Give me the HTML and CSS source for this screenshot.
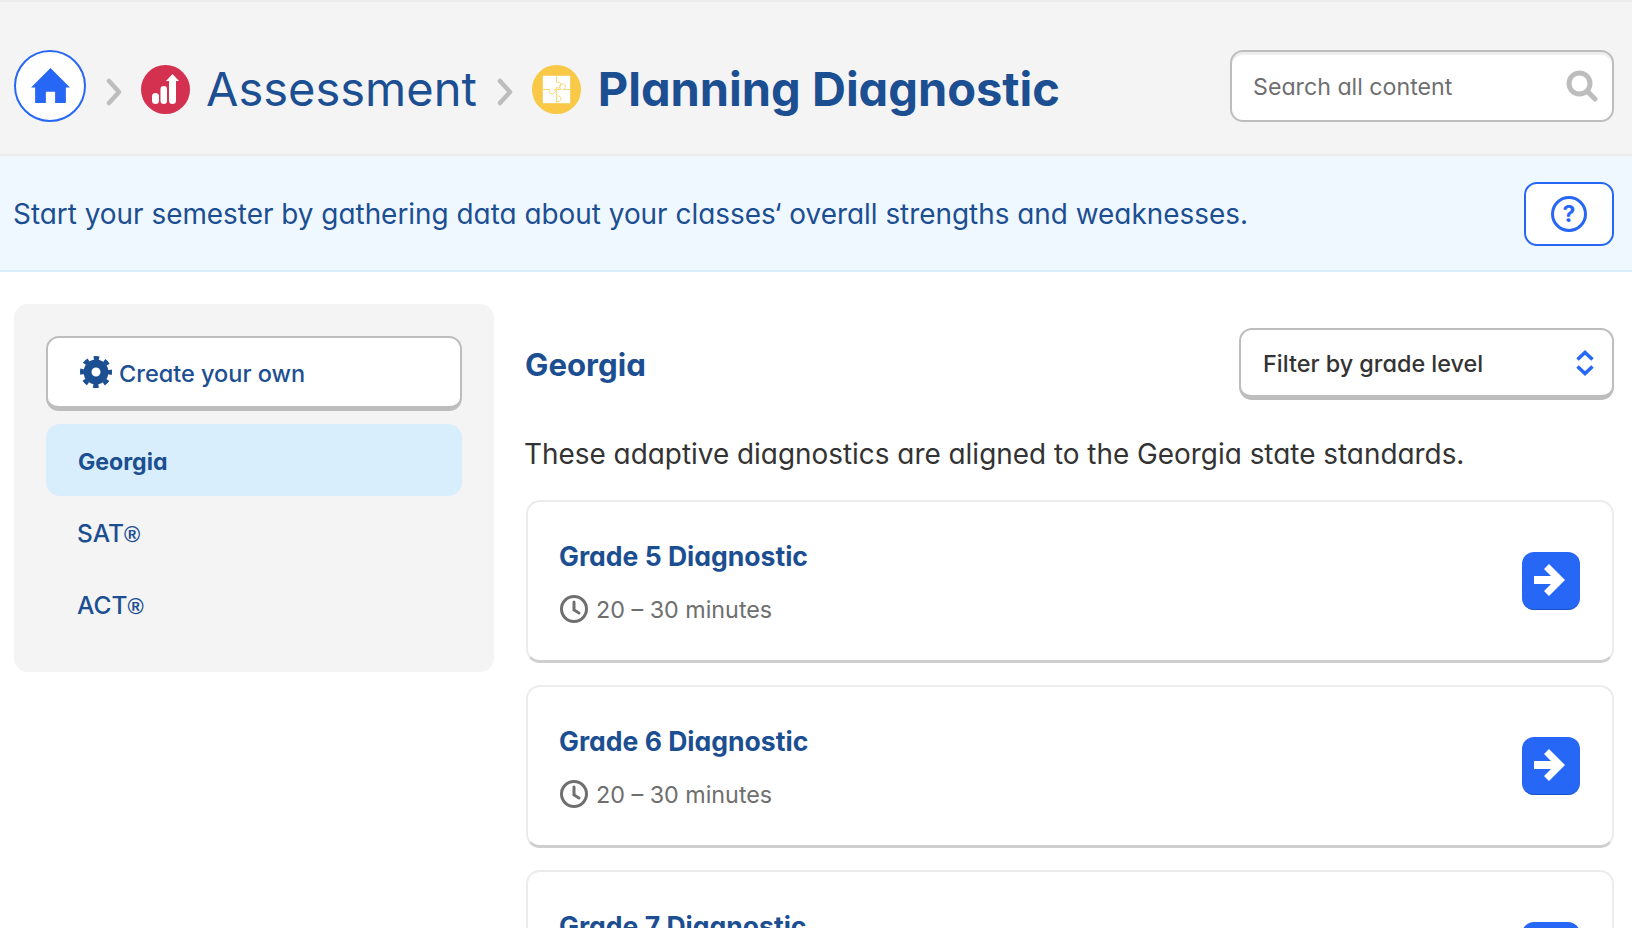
FILE: index.html
```html
<!DOCTYPE html>
<html lang="en">
<head>
<meta charset="utf-8">
<title>Planning Diagnostic</title>
<link rel="stylesheet" href="styles.css">
</head>
<body>
<header class="topbar">
  <nav class="crumbs">
    <a class="home" href="#"><svg viewBox="0 0 40 36" class="home-icon"><path d="M20 1 39 20H35V35H24.500V24H15.500V35H5V20H1Z"/></svg></a>
    <svg class="sep sep-first" viewBox="0 0 16 28"><path d="M3 3 13 14 3 25"/></svg>
    <span class="badge badge-red"><svg viewBox="0 0 49 49" class="badge-svg"><rect x="11" y="28" width="7" height="11" rx="3.500"/><rect x="19.500" y="21" width="6.500" height="18" rx="3.250"/><path d="M28 39V16H25L31.500 9 38 16H35V35.500A3.500 3.500 0 0 1 28 35.500Z"/></svg></span>
    <span class="crumb">Assessment</span>
    <svg class="sep sep-second" viewBox="0 0 16 28"><path d="M3 3 13 14 3 25"/></svg>
    <span class="badge badge-yellow"><svg viewBox="0 0 50 50" class="badge-svg"><rect x="11" y="11" width="28" height="28"/><g class="puzzle"><path d="M25 11V18M25 32V39M11 25H18M32 25H39"/><path d="M25 18A3 3 0 1 1 25 23V25H30A3 3 0 1 1 32 25"/><path d="M18 25A3 3 0 1 0 23 25H25V32A3 3 0 1 1 25 37"/></g></svg></span>
    <h1 class="page-title">Planning Diagnostic</h1>
  </nav>
  <label class="search">
    <span class="search-text">Search all content</span>
    <svg class="search-icon" viewBox="0 0 32 32"><circle cx="13.500" cy="13.500" r="10.500"/><path d="M21.500 21.500 29 29"/></svg>
  </label>
</header>

<section class="intro">
  <p class="intro-text">Start your semester by gathering data about your classes‘ overall strengths and weaknesses.</p>
  <button class="help" type="button"><span class="help-ring">?</span></button>
</section>

<div class="layout">
  <aside class="side">
    <a class="create" href="#"><svg class="gear" viewBox="0 0 32 32"><circle class="gear-hub" cx="16" cy="16" r="8.500"/><circle class="gear-teeth" cx="16" cy="16" r="14"/></svg><span>Create your own</span></a>
    <a class="side-item side-item-active" href="#"><span>Georgia</span></a>
    <a class="side-item" href="#"><span>SAT<span class="reg">®</span></span></a>
    <a class="side-item" href="#"><span>ACT<span class="reg">®</span></span></a>
  </aside>

  <main class="content">
    <div class="content-head">
      <h2 class="content-title">Georgia</h2>
      <div class="filter">
        <span>Filter by grade level</span>
        <svg class="updown" viewBox="0 0 20 26"><path d="M2.500 9.500 10 2.500 17.500 9.500M2.500 16.500 10 23.500 17.500 16.500"/></svg>
      </div>
    </div>
    <p class="lead">These adaptive diagnostics are aligned to the Georgia state standards.</p>

    <article class="card">
      <div class="card-body">
        <h3 class="card-title">Grade 5 Diagnostic</h3>
        <div class="card-time"><svg class="clock" viewBox="0 0 28 28"><circle cx="14" cy="14" r="12.500"/><path d="M14 7V15L19 18"/></svg>20 – 30 minutes</div>
      </div>
      <a class="go" href="#"><svg viewBox="0 0 34 32" class="go-arrow"><path d="M0 12H17L10 5 15 0 31 16 15 32 10 27 17 20H0Z"/></svg></a>
    </article>

    <article class="card">
      <div class="card-body">
        <h3 class="card-title">Grade 6 Diagnostic</h3>
        <div class="card-time"><svg class="clock" viewBox="0 0 28 28"><circle cx="14" cy="14" r="12.500"/><path d="M14 7V15L19 18"/></svg>20 – 30 minutes</div>
      </div>
      <a class="go" href="#"><svg viewBox="0 0 34 32" class="go-arrow"><path d="M0 12H17L10 5 15 0 31 16 15 32 10 27 17 20H0Z"/></svg></a>
    </article>

    <article class="card">
      <div class="card-body">
        <h3 class="card-title">Grade 7 Diagnostic</h3>
        <div class="card-time"><svg class="clock" viewBox="0 0 28 28"><circle cx="14" cy="14" r="12.500"/><path d="M14 7V15L19 18"/></svg>20 – 30 minutes</div>
      </div>
      <a class="go" href="#"><svg viewBox="0 0 34 32" class="go-arrow"><path d="M0 12H17L10 5 15 0 31 16 15 32 10 27 17 20H0Z"/></svg></a>
    </article>
  </main>
</div>
</body>
</html>
```

FILE: styles.css
```css
* { box-sizing: border-box; }
html, body { height: 928px; overflow: hidden; }
body {
  margin: 0;
  background: #fff;
  color: #333;
  font-family: Inter, "Open Sans", sans-serif;
  font-feature-settings: "cv11" 1;
}
a { color: inherit; text-decoration: none; }
h1, h2, h3, p { margin: 0; }

.topbar {
  height: 156px;
  padding: 15px 18px 0 14px;
  display: flex;
  align-items: center;
  justify-content: space-between;
  background: #f4f4f4;
  border-top: 2px solid #ececec;
  border-bottom: 2px solid #ececec;
}
.crumbs { display: flex; align-items: center; color: #1c4f92; }
.home {
  width: 72px;
  height: 72px;
  border-radius: 50%;
  background: #fff;
  border: 2px solid #2767f5;
  display: flex;
  align-items: center;
  justify-content: center;
}
.home-icon { width: 41px; height: 37px; fill: #2767f5; }
.sep { width: 16px; height: 28px; fill: none; stroke: #bdbdbd; stroke-width: 4.500; stroke-linecap: round; stroke-linejoin: round; margin-top: 12px; }
.sep-first { margin-left: 20px; margin-right: 19px; }
.sep-second { margin-left: 20px; margin-right: 19px; }
.badge { width: 49px; height: 49px; border-radius: 50%; display: block; flex: none; margin-top: 8px; }
.badge-red { background: #d43150; }
.badge-yellow { background: #f8c846; }
.badge-svg { display: block; width: 49px; height: 49px; fill: #fff; }
.puzzle { fill: none; stroke: #f8d777; stroke-width: 1; }
.crumb { margin-left: 16px; margin-top: 6px; font-size: 47px; font-weight: 400; line-height: 56px; }
.page-title { margin-left: 17px; margin-top: 6px; font-size: 47px; font-weight: 700; line-height: 56px; }

.search {
  width: 384px;
  height: 72px;
  padding: 0 14px 0 21px;
  display: flex;
  align-items: center;
  justify-content: space-between;
  background: #fff;
  border: 2px solid #bdbdbd;
  border-radius: 13px;
  box-shadow: inset 0 3px 0 #eee;
}
.search-text { font-size: 23.200px; color: #6f6f6f; margin-top: 2px; }
.search-icon { width: 32px; height: 32px; fill: none; stroke: #bdbdbd; stroke-width: 5; stroke-linecap: round; }

.intro {
  height: 116px;
  padding: 2px 18px 0 13px;
  display: flex;
  align-items: center;
  justify-content: space-between;
  background: #f0f8ff;
  border-bottom: 2px solid #d8eefc;
}
.intro-text { font-size: 27.900px; color: #1c4f92; }
.help {
  width: 90px;
  height: 64px;
  padding: 0;
  display: flex;
  align-items: center;
  justify-content: center;
  background: #fff;
  border: 2px solid #2767f5;
  border-radius: 13px;
}
.help-ring {
  width: 36px;
  height: 36px;
  border: 3px solid #2767f5;
  border-radius: 50%;
  color: #2767f5;
  font: 700 23px/30px Inter, sans-serif;
  text-align: center;
}

.layout { padding: 32px 18px 0 14px; display: flex; gap: 31px; align-items: flex-start; }
.side {
  width: 480px;
  flex: none;
  padding: 32px;
  background: #f4f4f4;
  border-radius: 14px;
  color: #1c4f92;
}
.create {
  height: 75px;
  margin-bottom: 13px;
  padding: 2px 0 0 32px;
  display: flex;
  align-items: center;
  gap: 7px;
  font-size: 23.500px;
  font-weight: 500;
  background: #fff;
  border: 2px solid #bdbdbd;
  border-bottom-width: 5px;
  border-radius: 13px;
}
.gear { width: 32px; height: 32px; margin-top: -2px; fill: none; stroke: #1c4f92; }
.gear-hub { stroke-width: 8; }
.gear-teeth { stroke-width: 4; stroke-dasharray: 5.500 5.496; stroke-dashoffset: 2.750; }
.side-item {
  height: 72px;
  padding: 2px 0 0 31px;
  display: flex;
  align-items: center;
  font-size: 24.500px;
  font-weight: 500;
  border-radius: 14px;
}
.reg { font-family: "Liberation Sans", sans-serif; font-size: 22px; font-weight: 700; }
.side-item-active { background: #d8eefc; padding: 3px 0 0 32px; font-size: 23.100px; font-weight: 700; }

.content { flex: 1; min-width: 0; }
.content-head { height: 72px; margin-top: 24px; display: flex; align-items: center; justify-content: space-between; }
.content-title { margin-top: 2px; font-size: 31.200px; font-weight: 700; color: #1c4f92; }
.filter {
  width: 375px;
  height: 72px;
  padding: 1px 17px 0 22px;
  display: flex;
  align-items: center;
  justify-content: space-between;
  font-size: 23.400px;
  font-weight: 500;
  color: #333;
  background: #fff;
  border: 2px solid #bdbdbd;
  border-bottom-width: 5px;
  border-radius: 13px;
}
.updown { width: 20px; height: 26px; fill: none; stroke: #2767f5; stroke-width: 3.500; }
.lead { margin: 34px 0 26px -1px; font-size: 27.900px; line-height: 40px; }
.card {
  height: 163px;
  margin: 0 0 22px 1px;
  padding: 0 32px;
  display: flex;
  align-items: center;
  justify-content: space-between;
  background: #fff;
  border: 2px solid #ececec;
  border-bottom-color: #cfcfcf;
  border-bottom-width: 3px;
  border-radius: 14px;
}
.card-body { padding-bottom: 2px; }
.card-title { margin-left: -1px; font-size: 26.550px; font-weight: 700; color: #1c4f92; line-height: 38px; }
.card-time { margin-top: 20px; display: flex; align-items: center; gap: 8px; font-size: 23.300px; color: #6f6f6f; }
.clock { width: 28px; height: 28px; fill: none; stroke: #6f6f6f; stroke-width: 3; stroke-linecap: round; }
.go {
  width: 58px;
  height: 58px;
  display: flex;
  align-items: center;
  justify-content: center;
  background: #2767f5;
  border-bottom: 1px solid #1b50c7;
  border-radius: 12px;
}
.go-arrow { width: 34px; height: 32px; margin-top: -2px; fill: #fff; }
```
